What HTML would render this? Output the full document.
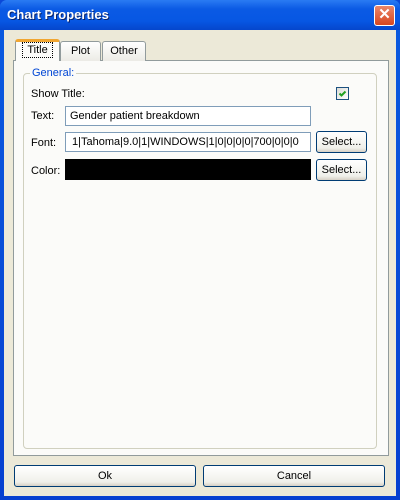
<!DOCTYPE html><html><head><style>
*{box-sizing:border-box;margin:0;padding:0}
body{width:400px;height:500px;overflow:hidden;font-family:"Liberation Sans",Tahoma,sans-serif;font-size:11px;color:#000;background:#0b48d8}
.win{position:absolute;left:0;top:0;width:400px;height:500px;background:linear-gradient(#0a5be0,#0740d0);border-radius:7px 7px 0 0}
.tb{position:absolute;left:0;top:0;width:400px;height:30px;background:linear-gradient(#2a7bf3,#0b5ae4 30%,#0757e3 70%,#0546cc);border-radius:7px 7px 0 0}
.tt{position:absolute;left:7px;top:7px;color:#fff;font-weight:bold;font-size:13px;text-shadow:1px 1px #0a246a}
.x{position:absolute;left:374px;top:5px;width:21px;height:21px;border:1px solid #fff;border-radius:3px;background:linear-gradient(#e9866a,#d8461f);color:#fff;font-weight:bold;font-size:15px;text-align:center;line-height:18px}
.body{position:absolute;left:4px;top:30px;width:392px;height:466px;background:#ece9d8}
.abs{position:absolute}
.panel{left:9px;top:30px;width:376px;height:396px;background:#fbfbf9;border:1px solid #919b9c}
.tab{top:11px;height:20px;border:1px solid #919b9c;border-bottom:none;background:linear-gradient(#fff,#ecebe5);text-align:center;line-height:18px;border-radius:3px 3px 0 0}
.grp{left:19px;top:43px;width:354px;height:376px;border:1px solid #d0d0bf;border-radius:4px}
.lg{left:26px;top:37px;background:#fbfbf9;color:#0046d5;padding:0 2px}
.inp{background:#fff;border:1px solid #7f9db9;padding:3px 4px;white-space:nowrap;overflow:hidden;height:20px;line-height:12px}
.btn{border:1px solid #003c74;border-radius:3px;background:linear-gradient(#fff,#f0f0ea 80%,#d6d0c5);text-align:center}
</style></head><body><div class="win">
<div class="tb"><div class="tt">Chart Properties</div><div class="x">✕</div></div>
<div class="body">
<div class="abs panel"></div>
<div class="abs tab" style="left:11px;width:45px;top:9px;height:22px;background:#fbfbf9;border-top:3px solid #f1a631;z-index:2;line-height:16px"><span style="display:inline-block;border:1px dotted #000;padding:0 4px;line-height:14px">Title</span></div>
<div class="abs tab" style="left:56px;width:41px">Plot</div>
<div class="abs tab" style="left:98px;width:44px">Other</div>
<div class="abs grp"></div>
<div class="abs lg">General:</div>
<div class="abs" style="left:27px;top:58px">Show Title:</div>
<div class="abs" style="left:332px;top:57px;width:13px;height:13px;border:1px solid #1c5180;background:linear-gradient(135deg,#dcdcd7,#fff)"><svg width="11" height="11" style="position:absolute;left:0;top:0"><path d="M2.5 5.5 L4.5 7.5 L8.5 3.5" stroke="#21a121" stroke-width="2" fill="none"/></svg></div>
<div class="abs" style="left:27px;top:80px">Text:</div>
<div class="abs inp" style="left:61px;top:76px;width:246px">Gender patient breakdown</div>
<div class="abs" style="left:27px;top:107px">Font:</div>
<div class="abs inp" style="left:61px;top:102px;width:246px;padding-left:6px">1|Tahoma|9.0|1|WINDOWS|1|0|0|0|0|700|0|0|0</div>
<div class="abs btn" style="left:312px;top:101px;width:51px;height:22px;line-height:20px">Select...</div>
<div class="abs" style="left:27px;top:135px">Color:</div>
<div class="abs" style="left:61px;top:129px;width:246px;height:21px;background:#000"></div>
<div class="abs btn" style="left:312px;top:129px;width:51px;height:22px;line-height:20px">Select...</div>
<div class="abs btn" style="left:10px;top:435px;width:182px;height:22px;line-height:20px">Ok</div>
<div class="abs btn" style="left:199px;top:435px;width:182px;height:22px;line-height:20px">Cancel</div>
</div></div></body></html>
